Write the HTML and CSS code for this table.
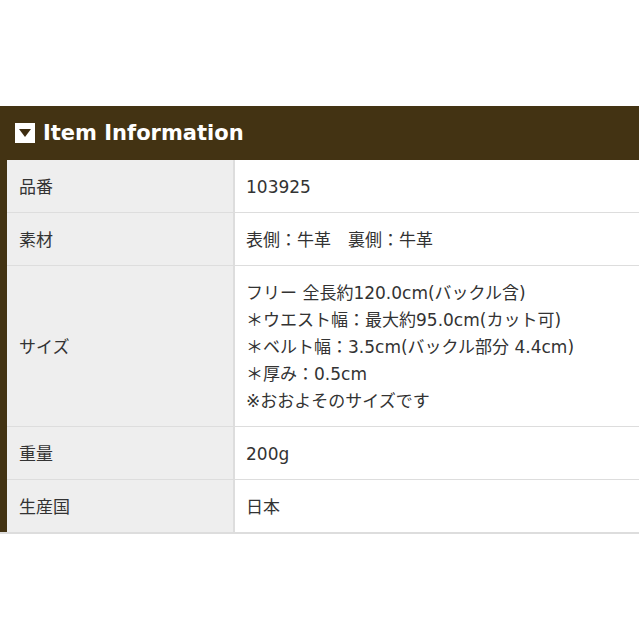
FILE: index.html
```html
<!DOCTYPE html>
<html lang="ja">
  <head>
    <meta charset="UTF-8" />
    <meta name="viewport" content="width=device-width, initial-scale=1.0" />
    <title>Item Information</title>
    <link rel="stylesheet" href="styles.css">
  </head>
  <body>
    <div class="item-info">
      <h2 class="item-title">
        <span class="title-icon">
          <svg width="12" height="8" viewBox="0 0 12 8"><polygon points="0,0 12,0 6,8" fill="#3d2c10" /></svg>
        </span>
        Item Information
      </h2>
      <table class="spec-table">
        <tbody>
          <tr>
            <th>品番</th>
            <td>103925</td>
          </tr>
          <tr>
            <th>素材</th>
            <td>表側：牛革　裏側：牛革</td>
          </tr>
          <tr>
            <th>サイズ</th>
            <td>
              フリー 全長約120.0cm(バックル含)<br />
              ＊ウエスト幅：最大約95.0cm(カット可)<br />
              ＊ベルト幅：3.5cm(バックル部分 4.4cm)<br />
              ＊厚み：0.5cm<br />
              ※おおよそのサイズです
            </td>
          </tr>
          <tr>
            <th>重量</th>
            <td>200g</td>
          </tr>
          <tr>
            <th>生産国</th>
            <td>日本</td>
          </tr>
        </tbody>
      </table>
    </div>
  </body>
</html>
```

FILE: styles.css
```css
body {
  margin: 0;
  background: #fff;
  font-family: "DejaVu Sans", "Noto Sans CJK JP", sans-serif;
  color: #333;
}

.item-info {
  margin-top: 106px;
  margin-right: 1px;
  background: #433313;
  padding-left: 7px;
  border-bottom: 2px solid #ddd;
}

.item-title {
  display: flex;
  align-items: center;
  gap: 8px;
  height: 54px;
  margin: 0 0 0 -7px;
  padding-left: 15px;
  font-family: "DejaVu Sans", Verdana, sans-serif;
  font-size: 21px;
  font-weight: bold;
  color: #fff;
}

.title-icon {
  display: flex;
  align-items: center;
  justify-content: center;
  width: 20px;
  height: 20px;
  background: #fff;
}

.spec-table {
  width: 100%;
  border-collapse: collapse;
  font-size: 17px;
  line-height: 27px;
}

.spec-table th,
.spec-table td {
  padding: 14px 11px 11px;
  border-bottom: 1px solid #ddd;
  text-align: left;
  vertical-align: middle;
}

.spec-table tr:last-child th,
.spec-table tr:last-child td {
  border-bottom: none;
}

.spec-table th {
  width: 203px;
  padding-left: 12px;
  background: #eee;
  font-weight: normal;
  border-right: 2px solid #ddd;
}

.spec-table td {
  background: #fff;
}
```
